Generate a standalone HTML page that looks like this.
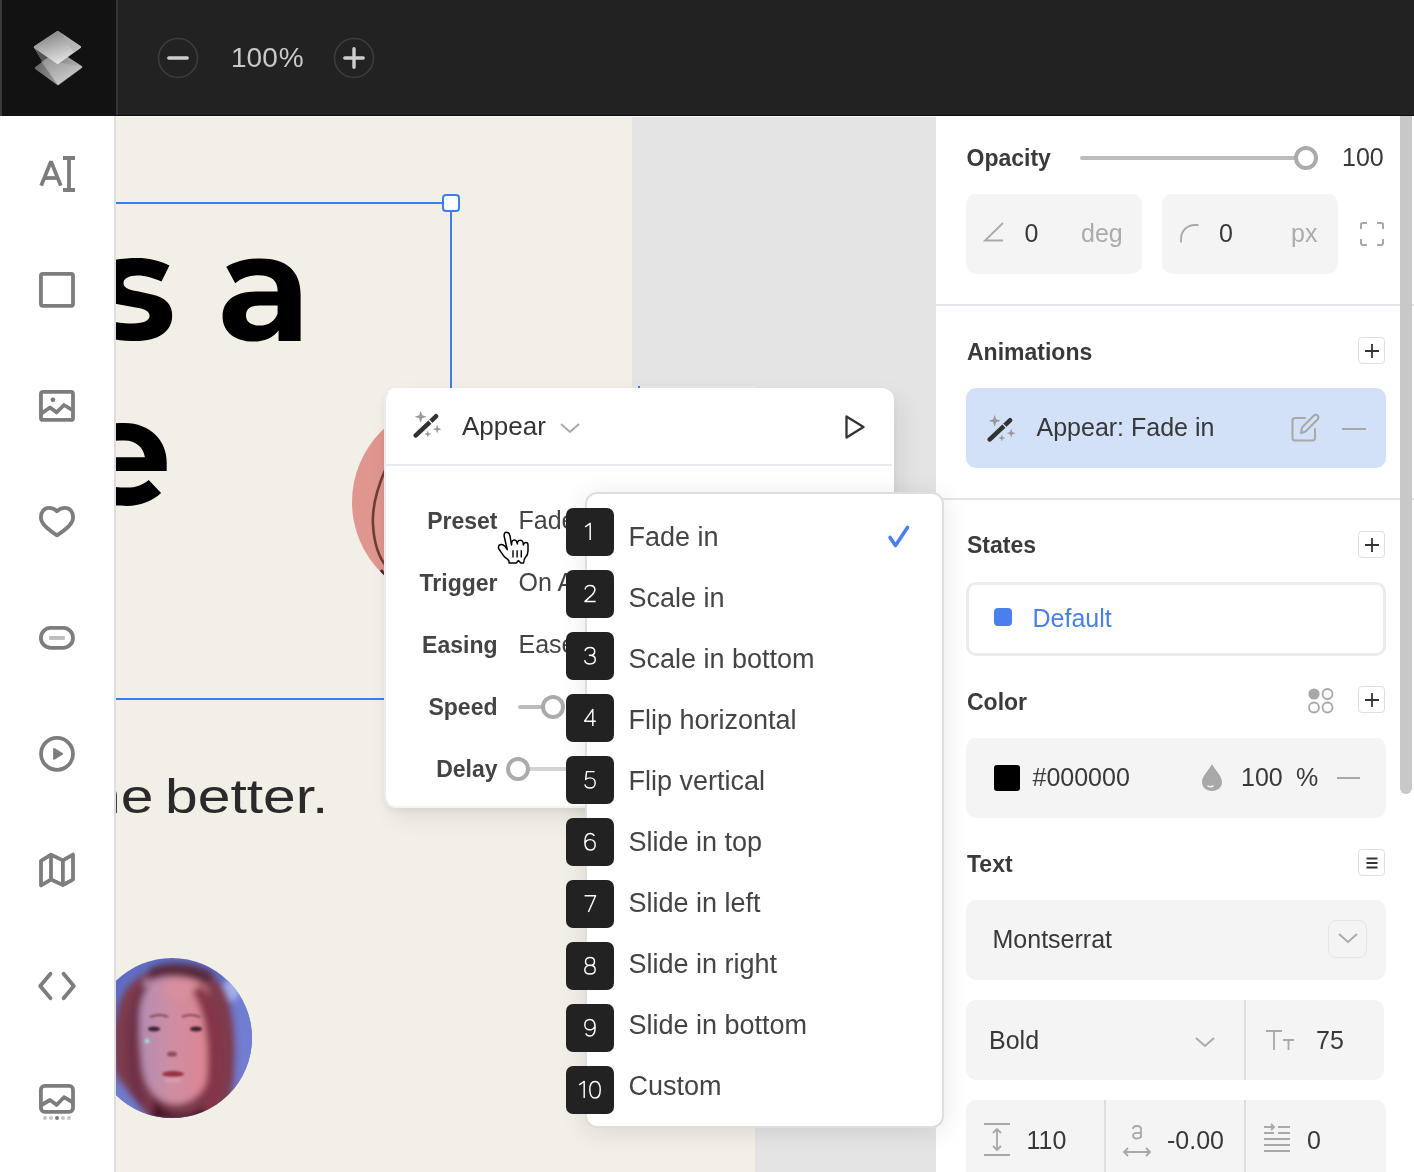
<!DOCTYPE html>
<html><head><meta charset="utf-8">
<style>
html,body{margin:0;padding:0;}
body{width:1414px;height:1172px;overflow:hidden;position:relative;background:#fff;font-family:"Liberation Sans", sans-serif;}
#root{position:absolute;left:0;top:0;width:1414px;height:1172px;overflow:hidden;will-change:transform;background:#fff;}
.a{position:absolute;}
.t{position:absolute;white-space:nowrap;}
</style></head><body>
<div id="root">
<div class="a" style="left:0px;top:0px;width:1414px;height:116px;background:#222222;"></div>
<div class="a" style="left:0px;top:115px;width:1414px;height:1px;background:#0c0c0c;"></div>
<div class="a" style="left:0px;top:0px;width:116px;height:116px;background:#121212;"></div>
<div class="a" style="left:0px;top:0px;width:2px;height:116px;background:#3a3a3a;"></div>
<div class="a" style="left:116px;top:0px;width:2px;height:115px;background:#363636;"></div>
<svg class="a" style="left:0;top:0" width="116" height="116" viewBox="0 0 116 116">
<defs>
<linearGradient id="lg1" x1="0.2" y1="0.1" x2="0.6" y2="1"><stop offset="0" stop-color="#8a8a8a"/><stop offset="1" stop-color="#e4e4e4"/></linearGradient>
<linearGradient id="lg2" x1="0" y1="0" x2="1" y2="0.3"><stop offset="0" stop-color="#5e5e5e"/><stop offset="1" stop-color="#b0b0b0"/></linearGradient>
<linearGradient id="lg3" x1="0" y1="0" x2="0.6" y2="1"><stop offset="0" stop-color="#7a7a7a"/><stop offset="1" stop-color="#cacaca"/></linearGradient>
</defs>
<path d="M36 68 L58 52 L81 67 L58 84 Z" fill="url(#lg2)" stroke="url(#lg2)" stroke-width="2.6" stroke-linejoin="round"/>
<path d="M35 48.5 L57.7 62.5 L81 67 L58 84 Z" fill="url(#lg3)" stroke="url(#lg3)" stroke-width="1.2" stroke-linejoin="round"/>
<path d="M35 48.5 L42 61.5 L48 57.5 Z" fill="#555"/>
<path d="M41.5 61 L57.5 84" stroke="#c8c8c8" stroke-width="0.8" opacity="0.7"/>
<path d="M35 47 L57.7 32 L79.8 47 L57.7 62.8 Z" fill="url(#lg1)" stroke="url(#lg1)" stroke-width="2.6" stroke-linejoin="round"/>
<path d="M62 33.5 L79.8 47 L73.2 52 Z" fill="#b0b0b0" opacity="0.7"/>
</svg>
<svg class="a" style="left:156px;top:36px" width="44" height="44" viewBox="0 0 44 44"><circle cx="22" cy="22" r="19.5" fill="none" stroke="#3d3d3d" stroke-width="1.6"/><path d="M12.8 22 H31.2" stroke="#cdcdcd" stroke-width="3.4" stroke-linecap="round"/></svg>
<svg class="a" style="left:332px;top:36px" width="44" height="44" viewBox="0 0 44 44"><circle cx="22" cy="22" r="19.5" fill="none" stroke="#3d3d3d" stroke-width="1.6"/><path d="M12.8 22 H31.2 M22 12.8 V31.2" stroke="#cdcdcd" stroke-width="3.4" stroke-linecap="round"/></svg>
<div class="t" style="top:44.30px;font-size:28px;line-height:28px;color:#c9c9c9;font-weight:400;left:231px;">100<span style="margin-left:1px">%</span></div>
<div class="a" style="left:0px;top:116px;width:115px;height:1056px;background:#ffffff;"></div>
<svg class="a" style="left:0;top:0" width="115" height="1172" viewBox="0 0 115 1172" fill="none" stroke="#7d7d7d" stroke-width="3.8">
<path d="M41.2 185.6 L51 161.4 L60.8 185.6" stroke-linejoin="bevel"/>
<path d="M44.5 178 H57.5"/>
<path d="M63 158 H75 M69 158 V190 M63 190 H75"/>
<rect x="40.95" y="273.9" width="32.05" height="32" rx="1.8"/>
<rect x="40.95" y="391.9" width="32.05" height="28" rx="2"/>
<path d="M41.5 413.5 L50 407.5 L55.5 411.5 M54.5 410.5 L56.5 412.5 L64 405 L73 410.5" stroke-linejoin="round"/>
<circle cx="52.9" cy="399.8" r="2.4" fill="#7d7d7d" stroke="none"/>
<path d="M57 511.3 C54.5 508.6 52 507.9 49 507.9 C44.2 507.9 40.9 511.8 40.9 517.2 C40.9 523.5 47 528.5 57 535.4 C67 528.5 73.1 523.5 73.1 517.2 C73.1 511.8 69.8 507.9 65 507.9 C62 507.9 59.5 508.6 57 511.3 Z" stroke-linejoin="round"/>
<rect x="40.9" y="627.9" width="32.1" height="19.9" rx="9.9"/>
<rect x="49.1" y="636" width="15.8" height="3.9" fill="#bdbdbd" stroke="none"/>
<circle cx="57" cy="753.9" r="16"/>
<path d="M54.2 749.2 L62 753.9 L54.2 758.6 Z" fill="#7d7d7d" stroke="#7d7d7d" stroke-width="2.2" stroke-linejoin="round"/>
<path d="M41 860.8 L51 854.6 L62.9 860.4 L73 854.6 V879.6 L62.9 885 L51 879.6 L41 885.4 Z M51 854.6 V879.6 M62.9 860.4 V885" stroke-linejoin="round"/>
<path d="M50.5 973.8 L40.2 986 L50.5 998.3 M63.6 973.8 L73.8 986 L63.6 998.3" stroke-linecap="round" stroke-linejoin="round"/>
<rect x="40.9" y="1085.9" width="32.1" height="25.9" rx="3.8"/>
<path d="M41.5 1105 L50 1100 L55.5 1104 M54.5 1103 L56.5 1105 L64 1097.2 L73 1102.5" stroke-linejoin="round"/>
<circle cx="45" cy="1118" r="2" fill="#c6c6c6" stroke="none"/><circle cx="51" cy="1118" r="2" fill="#c6c6c6" stroke="none"/><circle cx="57" cy="1118" r="2" fill="#7a7a7a" stroke="none"/><circle cx="63" cy="1118" r="2" fill="#c6c6c6" stroke="none"/><circle cx="69" cy="1118" r="2" fill="#c6c6c6" stroke="none"/>
</svg>
<div class="a" style="left:115px;top:116px;width:821px;height:1056px;background:#e4e4e4;"></div>
<div class="a" style="left:115px;top:116px;width:821px;height:1px;background:#fbfbf6;"></div>
<div class="a" style="left:115px;top:117px;width:517px;height:270px;background:#f2efe7;"></div>
<div class="a" style="left:115px;top:386px;width:640px;height:786px;background:#f2efe7;"></div>
<div class="a" style="left:632px;top:386px;width:124px;height:2px;background:#ece9df;"></div>
<div class="a" style="left:115px;top:116px;width:821px;height:1056px;overflow:hidden"><svg class="a" style="left:-15px;top:134px;overflow:visible" width="100" height="100" viewBox="100 250 100 100"><path d="M100 263 C112 259.5 125 258.1 137.6 258.1 C148 258.1 160 260.8 169.4 265.4 L161.5 281.6 C154 278.3 145.5 275.6 137.6 275.6 C128.5 275.6 123.5 278.8 123.5 283.3 C123.5 287.5 128 289.8 137.6 291.3 L152 294.5 C165.5 297.5 172.2 304.5 172.2 315.5 C172.2 331.5 158.5 341 136 341 C123.5 341 110 339 100 336.5 L100 319 C112 321.8 124 323.4 133.3 323.4 C143.5 323.4 149.6 320.8 149.6 315.8 C149.6 311.5 145.5 309.3 137 307.8 L118 304.3 C108 302.5 100 300 100 298 Z" fill="#000"/></svg>
<svg class="a" style="left:100px;top:134px;overflow:visible" width="100" height="100" viewBox="215 250 100 100"><path fill-rule="evenodd" d="M300.6 341 L278.6 341 L278.6 330.5 C273 338 264 341.6 253.5 341.6 C234.5 341.6 222.6 331.5 222.6 316.5 C222.6 301 234.5 291.6 257 291.6 L277.6 291.6 L277.6 290.5 C277.6 280.5 271 275.3 258.5 275.3 C250 275.3 242 277.8 235.2 283.2 L226.3 266.8 C235.5 261.2 248 258.4 260.8 258.4 C286 258.4 300.6 270.5 300.6 294.5 Z M277.6 305.5 L259.5 305.5 C250 305.5 246 309 246 315.5 C246 321.8 251.2 325.6 259.8 325.6 C268 325.6 275 321.5 277.6 313.5 Z" fill="#000"/></svg>
<svg class="a" style="left:-15px;top:299px;overflow:visible" width="100" height="100" viewBox="100 415 100 100"><path fill-rule="evenodd" d="M100 424.5 C106 423.5 115 423.1 124.8 423.1 C150 423.1 166.7 441 166.7 462 L166.7 470.9 L100 470.9 L100 484 C108 486.5 118 487.6 127 487.6 C135.5 487.6 143 484.8 148.7 479.9 L161.1 493.1 C152 501.5 140 506 127 506 C115 506 107 505 100 503.5 Z M100 441 C108 440.7 116 440.6 124.8 440.6 C135.5 440.6 143.5 447.5 144.9 457.3 L100 457.3 Z" fill="#000"/></svg>
<div class="t" style="top:655.52px;font-size:49px;line-height:49px;color:#2a2a2a;font-weight:400;left:-27px;transform:scaleX(1.2);transform-origin:0 0;">ne</div>
<div class="t" style="top:655.52px;font-size:49px;line-height:49px;color:#2a2a2a;font-weight:400;left:49.5px;transform:scaleX(1.2);transform-origin:0 0;">better.</div>
<svg class="a" style="left:237px;top:286px" width="200" height="200" viewBox="352 402 200 200">
<defs><clipPath id="pc"><circle cx="452" cy="502" r="100"/></clipPath><filter id="bl3" x="-50%" y="-20%" width="200%" height="140%"><feGaussianBlur stdDeviation="0.6"/></filter></defs>
<g clip-path="url(#pc)">
<rect x="352" y="402" width="200" height="200" fill="#df968e"/>
<path d="M386 468 C377 488 372 508 373 525 C374 542 378 556 386 566" fill="none" stroke="#6e3c38" stroke-width="2.6" filter="url(#bl3)"/>
<path d="M381 570 L386 577" stroke="#3a2a30" stroke-width="3" filter="url(#bl3)"/>
</g></svg>
<svg class="a" style="left:-23px;top:842px" width="160" height="160" viewBox="92 958 160 160">
<defs>
<clipPath id="gc"><circle cx="172" cy="1038" r="80"/></clipPath>
<filter id="bl" x="-20%" y="-20%" width="140%" height="140%"><feGaussianBlur stdDeviation="3"/></filter>
<filter id="bl2" x="-20%" y="-20%" width="140%" height="140%"><feGaussianBlur stdDeviation="1.3"/></filter>
<linearGradient id="fg" x1="0" y1="0" x2="1" y2="0"><stop offset="0" stop-color="#b48db4"/><stop offset="0.45" stop-color="#cf8ea2"/><stop offset="1" stop-color="#e0838f"/></linearGradient>
</defs>
<g clip-path="url(#gc)">
<rect x="92" y="958" width="160" height="160" fill="#5f6ec4"/>
<g filter="url(#bl)">
<ellipse cx="240" cy="1045" rx="24" ry="70" fill="#6f7dd0"/>
<ellipse cx="231" cy="990" rx="8" ry="11" fill="#a4b0f0"/>
<path d="M118 1010 C125 965 190 950 222 985 C240 1010 238 1080 228 1118 L128 1118 C112 1080 110 1040 118 1010 Z" fill="#7d3a4c"/>
<path d="M145 980 C160 972 190 972 205 985 C214 1000 214 1040 210 1070 C206 1092 192 1104 176 1104 C160 1104 147 1092 143 1070 C139 1040 138 1000 145 980 Z" fill="url(#fg)"/>
<ellipse cx="182" cy="990" rx="18" ry="10" fill="#d9909c" opacity="0.8"/>
<path d="M155 1098 C165 1120 200 1120 206 1098 L208 1120 L150 1120 Z" fill="#4a1828"/>
<path d="M200 985 C220 1000 228 1060 216 1112 L202 1112 C212 1060 208 1015 192 992 Z" fill="#86364a"/>
<path d="M150 985 C133 1005 132 1070 148 1106 L136 1106 C122 1070 124 1010 140 988 Z" fill="#6e3048"/>
<path d="M150 968 C170 960 200 962 215 975 L205 985 C190 975 165 974 148 982 Z" fill="#5a2a3e"/>
<path d="M92 1050 C108 1062 124 1090 150 1120 L92 1120 Z" fill="#6e7dcc"/>
<path d="M92 990 C100 975 112 966 125 962 C118 980 116 995 114 1010 L92 1010 Z" fill="#5b69c0"/>
</g>
<g filter="url(#bl2)">
<ellipse cx="154" cy="1029" rx="6" ry="2.4" fill="#3b2232"/>
<ellipse cx="196" cy="1029" rx="6" ry="2.4" fill="#3b2232"/>
<ellipse cx="172" cy="1054" rx="5" ry="2.6" fill="#8e4a5c"/>
<ellipse cx="173" cy="1074" rx="11" ry="3" fill="#9a3042"/>
<ellipse cx="173" cy="1080" rx="9" ry="2.6" fill="#d89aac"/>
<path d="M150 1017 Q160 1013 168 1017 M182 1017 Q190 1013 200 1017" stroke="#6a3848" stroke-width="1.4" fill="none"/>
<circle cx="147" cy="1041" r="2.5" fill="#9ed6d6"/>
</g>
</g>
</svg>
</div><div class="a" style="left:115px;top:202px;width:336px;height:2px;background:#3f7cf0;"></div>
<div class="a" style="left:450px;top:203px;width:2px;height:185px;background:#3f7cf0;"></div>
<div class="a" style="left:115px;top:698px;width:270px;height:2px;background:#3f7cf0;"></div>
<div class="a" style="left:638px;top:386px;width:2px;height:2px;background:#3f7cf0;"></div>
<div class="a" style="left:442px;top:194px;width:14px;height:14px;border:2px solid #3f7cf0;border-radius:4px;background:#fff"></div>
<div class="a" style="left:114px;top:116px;width:2px;height:1056px;background:#dedede;"></div>
<div class="a" style="left:936px;top:116px;width:478px;height:1056px;background:#ffffff;"></div>
<div class="t" style="top:146.53px;font-size:23px;line-height:23px;color:#3a3a3a;font-weight:700;left:966.5px;">Opacity</div>
<div class="a" style="left:1080px;top:156px;width:226px;height:4px;background:#bdbdbd;border-radius:2px;"></div>
<div class="a" style="left:1294px;top:146px;width:16px;height:16px;border:4px solid #ababab;border-radius:50%;background:#fff"></div>
<div class="t" style="top:144.84px;font-size:25px;line-height:25px;color:#383838;font-weight:400;left:1342px;">100</div>
<div class="a" style="left:966px;top:194px;width:176px;height:80px;background:#f4f4f4;border-radius:10px;"></div>
<div class="a" style="left:1162px;top:194px;width:176px;height:80px;background:#f4f4f4;border-radius:10px;"></div>
<svg class="a" style="left:982px;top:220px" width="24" height="24" viewBox="0 0 24 24"><path d="M21 3 L3 20.5 H21" fill="none" stroke="#a8a8a8" stroke-width="1.8"/></svg>
<div class="t" style="top:220.54px;font-size:25px;line-height:25px;color:#383838;font-weight:400;left:1024.5px;">0</div>
<div class="t" style="top:220.54px;font-size:25px;line-height:25px;color:#ababab;font-weight:400;left:1081px;">deg</div>
<svg class="a" style="left:1178px;top:222px" width="24" height="24" viewBox="0 0 24 24"><path d="M3 20.5 V17 C3 9 9 3 17 3 H20.5" fill="none" stroke="#a8a8a8" stroke-width="1.8"/></svg>
<div class="t" style="top:220.54px;font-size:25px;line-height:25px;color:#383838;font-weight:400;left:1219px;">0</div>
<div class="t" style="top:220.54px;font-size:25px;line-height:25px;color:#ababab;font-weight:400;left:1291px;">px</div>
<svg class="a" style="left:1358px;top:220px" width="28" height="28" viewBox="0 0 28 28" fill="none" stroke="#a8a8a8" stroke-width="2"><path d="M3 9 V5 Q3 3 5 3 H9 M19 3 H23 Q25 3 25 5 V9 M25 19 V23 Q25 25 23 25 H19 M9 25 H5 Q3 25 3 23 V19"/></svg>
<div class="a" style="left:936px;top:304px;width:478px;height:1.5px;background:#e4e4ec;"></div>
<div class="t" style="top:340.83px;font-size:23px;line-height:23px;color:#3a3a3a;font-weight:700;left:967px;">Animations</div>
<div class="a" style="left:1358px;top:336.5px;width:25px;height:25px;border:1.5px solid #e0e0e0;border-radius:4px;background:#fff"></div><svg class="a" style="left:1358px;top:336.5px" width="28" height="28" viewBox="0 0 28 28"><path d="M7 14 H21 M14 7 V21" stroke="#333" stroke-width="1.8"/></svg>
<div class="a" style="left:966px;top:388px;width:420px;height:80px;background:#d2e0f8;border-radius:10px;"></div>
<svg class="a" style="left:987px;top:413px" width="30" height="30" viewBox="0 0 30 30"><path d="M2.8 26.4 L23 7.3" stroke="#333" stroke-width="4.6" stroke-linecap="round"/><path d="M15.2 10.4 L19.6 15" stroke="#d2e0f8" stroke-width="1.3"/><path d="M7.70 1.80 L9.23 6.27 L13.70 7.80 L9.23 9.33 L7.70 13.80 L6.17 9.33 L1.70 7.80 L6.17 6.27 Z" fill="#9a9a9a"/><path d="M24.20 15.80 L25.32 19.08 L28.60 20.20 L25.32 21.32 L24.20 24.60 L23.08 21.32 L19.80 20.20 L23.08 19.08 Z" fill="#9a9a9a"/><path d="M14.80 21.40 L15.72 24.08 L18.40 25.00 L15.72 25.92 L14.80 28.60 L13.88 25.92 L11.20 25.00 L13.88 24.08 Z" fill="#9a9a9a"/></svg>
<div class="t" style="top:414.84px;font-size:25px;line-height:25px;color:#383838;font-weight:400;left:1036.5px;">Appear: Fade in</div>
<svg class="a" style="left:1290px;top:413px" width="32" height="30" viewBox="0 0 32 30" fill="none" stroke="#a8a8a8" stroke-width="2" stroke-linejoin="round" stroke-linecap="round"><path d="M15 5 H5 Q2.5 5 2.5 7.5 V25 Q2.5 27.5 5 27.5 H22.5 Q25 27.5 25 25 V16"/><path d="M11 20 L12 14.5 L24.5 2 Q26 1 27.5 2.5 L28 3 Q29 4.5 28 6 L15.5 18.5 Z"/></svg>
<div class="a" style="left:1342px;top:427.5px;width:24px;height:2px;background:#a8a8a8;"></div>
<div class="a" style="left:936px;top:498px;width:478px;height:1.5px;background:#e4e4ec;"></div>
<div class="t" style="top:534.23px;font-size:23px;line-height:23px;color:#3a3a3a;font-weight:700;left:967px;">States</div>
<div class="a" style="left:1358px;top:530.5px;width:25px;height:25px;border:1.5px solid #e0e0e0;border-radius:4px;background:#fff"></div><svg class="a" style="left:1358px;top:530.5px" width="28" height="28" viewBox="0 0 28 28"><path d="M7 14 H21 M14 7 V21" stroke="#333" stroke-width="1.8"/></svg>
<div class="a" style="left:966px;top:582px;width:414px;height:68px;border:3px solid #ececec;border-radius:10px;background:#fff"></div>
<div class="a" style="left:994px;top:608px;width:18px;height:18px;background:#4a80ee;border-radius:4px;"></div>
<div class="t" style="top:605.84px;font-size:25px;line-height:25px;color:#4a7fe8;font-weight:400;left:1032.5px;">Default</div>
<div class="t" style="top:690.53px;font-size:23px;line-height:23px;color:#3a3a3a;font-weight:700;left:967px;">Color</div>
<svg class="a" style="left:1306px;top:686px" width="30" height="30" viewBox="0 0 30 30" fill="none" stroke="#a8a8a8" stroke-width="1.8"><circle cx="8" cy="8" r="5.6" fill="#a8a8a8" stroke="none"/><circle cx="21.5" cy="8" r="5"/><circle cx="8" cy="21.5" r="5"/><circle cx="21.5" cy="21.5" r="5"/></svg>
<div class="a" style="left:1358px;top:686px;width:25px;height:25px;border:1.5px solid #e0e0e0;border-radius:4px;background:#fff"></div><svg class="a" style="left:1358px;top:686px" width="28" height="28" viewBox="0 0 28 28"><path d="M7 14 H21 M14 7 V21" stroke="#333" stroke-width="1.8"/></svg>
<div class="a" style="left:966px;top:738px;width:420px;height:80px;background:#f4f4f4;border-radius:10px;"></div>
<div class="a" style="left:994px;top:765px;width:26px;height:26px;background:#000;border-radius:3px;"></div>
<div class="t" style="top:765.44px;font-size:25px;line-height:25px;color:#383838;font-weight:400;left:1032.5px;">#000000</div>
<svg class="a" style="left:1199px;top:762px" width="26" height="30" viewBox="0 0 26 30"><path d="M13 2 C10 8 3 14 3 20 C3 25.5 7.5 29 13 29 C18.5 29 23 25.5 23 20 C23 14 16 8 13 2 Z" fill="#a8a8a8"/><path d="M9 24 Q11 25.5 14 24" fill="none" stroke="#f4f4f4" stroke-width="1.5" stroke-linecap="round"/></svg>
<div class="t" style="top:765.44px;font-size:25px;line-height:25px;color:#383838;font-weight:400;left:1241px;">100</div>
<div class="t" style="top:765.44px;font-size:25px;line-height:25px;color:#383838;font-weight:400;left:1296px;">%</div>
<div class="a" style="left:1337px;top:777px;width:23px;height:2px;background:#a8a8a8;"></div>
<div class="t" style="top:852.53px;font-size:23px;line-height:23px;color:#3a3a3a;font-weight:700;left:967px;">Text</div>
<div class="a" style="left:1358px;top:848.5px;width:25px;height:25px;border:1.5px solid #e0e0e0;border-radius:4px;background:#fff"></div><svg class="a" style="left:1358px;top:848.5px" width="28" height="28" viewBox="0 0 28 28"><path d="M8.5 9.5 H19.5 M8.5 14 H19.5 M8.5 18.5 H19.5" stroke="#333" stroke-width="2"/></svg>
<div class="a" style="left:966px;top:900px;width:420px;height:80px;background:#f4f4f4;border-radius:10px;"></div>
<div class="t" style="top:927.04px;font-size:25px;line-height:25px;color:#383838;font-weight:400;left:992.5px;">Montserrat</div>
<div class="a" style="left:1328px;top:920px;width:37px;height:36px;border:1.5px solid #e6e6e6;border-radius:8px;"></div>
<svg class="a" style="left:1336px;top:930px" width="24" height="16" viewBox="0 0 24 16"><path d="M3 4 L12 12 L21 4" fill="none" stroke="#aaa" stroke-width="2"/></svg>
<div class="a" style="left:966px;top:1000px;width:418px;height:80px;background:#f4f4f4;border-radius:10px;"></div>
<div class="a" style="left:1244px;top:1000px;width:2px;height:80px;background:#dedede;"></div>
<div class="t" style="top:1028.04px;font-size:25px;line-height:25px;color:#383838;font-weight:400;left:989px;">Bold</div>
<svg class="a" style="left:1193px;top:1034px" width="24" height="16" viewBox="0 0 24 16"><path d="M3 4 L12 12 L21 4" fill="none" stroke="#aaa" stroke-width="2"/></svg>
<svg class="a" style="left:1264px;top:1028px" width="32" height="24" viewBox="0 0 32 24" fill="none" stroke="#a8a8a8" stroke-width="1.8"><path d="M2 3 H18 M10 3 V22 M19 12 H30 M24.5 12 V22"/></svg>
<div class="t" style="top:1028.04px;font-size:25px;line-height:25px;color:#383838;font-weight:400;left:1316px;">75</div>
<div class="a" style="left:966px;top:1100px;width:420px;height:80px;background:#f4f4f4;border-radius:10px;"></div>
<div class="a" style="left:1104px;top:1100px;width:2px;height:72px;background:#dedede;"></div>
<div class="a" style="left:1244px;top:1100px;width:2px;height:72px;background:#dedede;"></div>
<svg class="a" style="left:982px;top:1122px" width="30" height="36" viewBox="0 0 30 36" fill="none" stroke="#a8a8a8" stroke-width="1.8"><path d="M2 2 H28 M2 33 H28 M15 7 V28 M11 11 L15 7 L19 11 M11 24 L15 28 L19 24"/></svg>
<div class="t" style="top:1128.44px;font-size:25px;line-height:25px;color:#383838;font-weight:400;left:1026.5px;">110</div>
<svg class="a" style="left:1122px;top:1123px" width="30" height="36" viewBox="0 0 30 36" fill="none" stroke="#a8a8a8" stroke-width="1.8"><path d="M11 6 Q11 3 15 3 Q19 3 19 6 V15 M19 10 Q11 9 11 12.5 Q11 15.5 15 15.5 Q19 15.5 19 12" /><path d="M2 29 H28 M6 25 L2 29 L6 33 M24 25 L28 29 L24 33"/></svg>
<div class="t" style="top:1128.44px;font-size:25px;line-height:25px;color:#383838;font-weight:400;left:1167px;">-0.00</div>
<svg class="a" style="left:1262px;top:1122px" width="30" height="36" viewBox="0 0 30 36" fill="none" stroke="#a8a8a8" stroke-width="1.8"><path d="M2 5 H12 M9 2 L12 5 L9 8 M16 5 H28 M16 11 H28 M2 11 H12 M2 17 H28 M2 23 H28 M2 29 H28"/></svg>
<div class="t" style="top:1128.44px;font-size:25px;line-height:25px;color:#383838;font-weight:400;left:1307px;">0</div>
<div class="a" style="left:384px;top:388px;width:506px;height:416px;background:#fff;border:2px solid #eaecf0;border-top-color:#fff;border-right-color:#fff;border-bottom-color:#f3f4f6;border-radius:12px;box-shadow:0 3px 6px rgba(0,0,0,0.06), 8px 10px 24px rgba(0,0,0,0.07)"></div>
<div class="a" style="left:386px;top:464px;width:506px;height:2px;background:#e7eaef;"></div>
<svg class="a" style="left:413px;top:409px" width="30" height="30" viewBox="0 0 30 30"><path d="M2.8 26.4 L23 7.3" stroke="#333" stroke-width="4.6" stroke-linecap="round"/><path d="M15.2 10.4 L19.6 15" stroke="#fff" stroke-width="1.3"/><path d="M7.70 1.80 L9.23 6.27 L13.70 7.80 L9.23 9.33 L7.70 13.80 L6.17 9.33 L1.70 7.80 L6.17 6.27 Z" fill="#9a9a9a"/><path d="M24.20 15.80 L25.32 19.08 L28.60 20.20 L25.32 21.32 L24.20 24.60 L23.08 21.32 L19.80 20.20 L23.08 19.08 Z" fill="#9a9a9a"/><path d="M14.80 21.40 L15.72 24.08 L18.40 25.00 L15.72 25.92 L14.80 28.60 L13.88 25.92 L11.20 25.00 L13.88 24.08 Z" fill="#9a9a9a"/></svg>
<div class="t" style="top:412.99px;font-size:26px;line-height:26px;color:#333;font-weight:400;left:462px;">Appear</div>
<svg class="a" style="left:558px;top:420px" width="24" height="16" viewBox="0 0 24 16"><path d="M3 4 L12 12 L21 4" fill="none" stroke="#aaa" stroke-width="2"/></svg>
<svg class="a" style="left:842px;top:412px" width="26" height="30" viewBox="0 0 26 30"><path d="M4.5 4.5 L21.5 15 L4.5 25.5 Z" fill="none" stroke="#333" stroke-width="2.3" stroke-linejoin="round"/></svg>
<div class="t" style="top:509.53px;font-size:23px;line-height:23px;color:#444;font-weight:700;right:916.5px;text-align:right;">Preset</div>
<div class="t" style="top:507.84px;font-size:25px;line-height:25px;color:#444;font-weight:400;left:518.5px;">Fade in</div>
<div class="t" style="top:571.53px;font-size:23px;line-height:23px;color:#444;font-weight:700;right:916.5px;text-align:right;">Trigger</div>
<div class="t" style="top:569.84px;font-size:25px;line-height:25px;color:#444;font-weight:400;left:518.5px;">On Appear</div>
<div class="t" style="top:633.53px;font-size:23px;line-height:23px;color:#444;font-weight:700;right:916.5px;text-align:right;">Easing</div>
<div class="t" style="top:631.84px;font-size:25px;line-height:25px;color:#444;font-weight:400;left:518.5px;">Ease in out</div>
<div class="t" style="top:695.53px;font-size:23px;line-height:23px;color:#444;font-weight:700;right:916.5px;text-align:right;">Speed</div>
<div class="t" style="top:757.53px;font-size:23px;line-height:23px;color:#444;font-weight:700;right:916.5px;text-align:right;">Delay</div>
<div class="a" style="left:518px;top:705px;width:30px;height:4px;background:#bdbdbd;border-radius:2px;"></div>
<div class="a" style="left:541px;top:695px;width:16px;height:16px;border:4px solid #ababab;border-radius:50%;background:#fff"></div>
<div class="a" style="left:525px;top:767px;width:60px;height:4px;background:#d4d4d4;border-radius:2px;"></div>
<div class="a" style="left:506px;top:757px;width:16px;height:16px;border:4px solid #ababab;border-radius:50%;background:#fff"></div>
<svg class="a" style="left:490px;top:525px;overflow:visible" width="50" height="45" viewBox="490 525 50 45"><path d="M507.3 549.6 L504.2 536.5 C503.8 533.5 505 532.3 506.5 532.3 C508.3 532.3 509.5 533.5 510 535.8 L511.5 545 L511.8 542 C512.3 540.5 513.2 540 514.2 540 C515.8 540 516.8 541 517.2 543 L517.3 544 L517.6 542 C518 540.8 519.2 540.2 520.3 540.2 C521.8 540.2 522.8 541.2 523.2 543 L523.4 545 L523.8 543.8 C524.3 542.8 525.2 542.4 526.1 542.4 C527.3 542.4 528 543.3 528 545 L528 551 C528 553.5 527.2 555.5 525.5 557.3 C524 559 523.6 560.5 523.6 563 L520.8 563 L518.4 560.5 L516.3 563 L509.2 563 L508.8 560.8 C507.5 559 505.8 557.8 504.6 556.9 C502.5 554.5 500.8 551.5 499.2 549.6 C498 548 498.3 545.5 500 544.8 C501.5 544.2 503.5 544.8 505 546.3 Z" fill="#fff" stroke="#000" stroke-width="1.5" stroke-linejoin="round"/><path d="M513 550.3 V557.6 M517.1 550.3 V557.6 M521.3 550.3 V557.6" stroke="#000" stroke-width="1.4"/></svg>
<div class="a" style="left:585px;top:492px;width:355px;height:632px;background:#fff;border:2px solid #dedede;border-radius:12px;box-shadow:0 4px 26px rgba(0,0,0,0.10)"></div>
<div class="a" style="left:566px;top:508px;width:48px;height:48px;background:#222;border-radius:7px;"></div>
<svg class="a" style="left:584px;top:522.5px;overflow:visible" width="12" height="18" viewBox="0 0 12 18"><path d="M1.2 3.8 L6.2 0.4 V17" fill="none" stroke="#fff" stroke-width="1.45" stroke-linejoin="round"/></svg>
<div class="t" style="top:524.14px;font-size:27px;line-height:27px;color:#444;font-weight:400;left:628.5px;">Fade in</div>
<div class="a" style="left:566px;top:570px;width:48px;height:48px;background:#222;border-radius:7px;"></div>
<svg class="a" style="left:584px;top:584.5px;overflow:visible" width="12" height="18" viewBox="0 0 12 18"><path d="M1.2 4.6 C1.2 2 3.2 0.4 6 0.4 C8.9 0.4 10.9 2.2 10.9 4.8 C10.9 7 9.6 8.4 7.6 10.4 L1 16.4 H11.6" fill="none" stroke="#fff" stroke-width="1.45" stroke-linejoin="round"/></svg>
<div class="t" style="top:585.14px;font-size:27px;line-height:27px;color:#444;font-weight:400;left:628.5px;">Scale in</div>
<div class="a" style="left:566px;top:632px;width:48px;height:48px;background:#222;border-radius:7px;"></div>
<svg class="a" style="left:584px;top:646.5px;overflow:visible" width="12" height="18" viewBox="0 0 12 18"><path d="M1 4 C1.4 1.8 3.4 0.4 6 0.4 C8.8 0.4 10.7 2 10.7 4.4 C10.7 6.8 8.8 8.3 5.4 8.3 C9.3 8.3 11.3 10 11.3 12.6 C11.3 15.2 9.2 17 6 17 C3.1 17 1 15.5 0.7 13.2" fill="none" stroke="#fff" stroke-width="1.45" stroke-linejoin="round"/></svg>
<div class="t" style="top:646.14px;font-size:27px;line-height:27px;color:#444;font-weight:400;left:628.5px;">Scale in bottom</div>
<div class="a" style="left:566px;top:694px;width:48px;height:48px;background:#222;border-radius:7px;"></div>
<svg class="a" style="left:584px;top:708.5px;overflow:visible" width="12" height="18" viewBox="0 0 12 18"><path d="M8.8 17 V0.4 L0.6 12.2 H11.8" fill="none" stroke="#fff" stroke-width="1.45" stroke-linejoin="round"/></svg>
<div class="t" style="top:707.14px;font-size:27px;line-height:27px;color:#444;font-weight:400;left:628.5px;">Flip horizontal</div>
<div class="a" style="left:566px;top:756px;width:48px;height:48px;background:#222;border-radius:7px;"></div>
<svg class="a" style="left:584px;top:770.5px;overflow:visible" width="12" height="18" viewBox="0 0 12 18"><path d="M10.6 0.6 H2.6 L1.6 8.6 C2.6 7.5 4.1 6.9 6 6.9 C9.1 6.9 11.2 9 11.2 11.9 C11.2 15 9 17 6 17 C3.3 17 1.3 15.5 0.9 13.4" fill="none" stroke="#fff" stroke-width="1.45" stroke-linejoin="round"/></svg>
<div class="t" style="top:768.14px;font-size:27px;line-height:27px;color:#444;font-weight:400;left:628.5px;">Flip vertical</div>
<div class="a" style="left:566px;top:818px;width:48px;height:48px;background:#222;border-radius:7px;"></div>
<svg class="a" style="left:584px;top:832.5px;overflow:visible" width="12" height="18" viewBox="0 0 12 18"><path d="M10.3 3 C9.5 1.3 8 0.4 6.2 0.4 C2.7 0.4 0.9 3.6 0.9 9 C0.9 14 2.9 17 6.1 17 C9.1 17 11.2 14.9 11.2 11.7 C11.2 8.6 9.1 6.6 6.3 6.6 C3.6 6.6 1.6 8.3 1 10.5" fill="none" stroke="#fff" stroke-width="1.45" stroke-linejoin="round"/></svg>
<div class="t" style="top:829.14px;font-size:27px;line-height:27px;color:#444;font-weight:400;left:628.5px;">Slide in top</div>
<div class="a" style="left:566px;top:880px;width:48px;height:48px;background:#222;border-radius:7px;"></div>
<svg class="a" style="left:584px;top:894.5px;overflow:visible" width="12" height="18" viewBox="0 0 12 18"><path d="M0.6 0.8 H11.6 L4.4 17" fill="none" stroke="#fff" stroke-width="1.45" stroke-linejoin="round"/></svg>
<div class="t" style="top:890.14px;font-size:27px;line-height:27px;color:#444;font-weight:400;left:628.5px;">Slide in left</div>
<div class="a" style="left:566px;top:942px;width:48px;height:48px;background:#222;border-radius:7px;"></div>
<svg class="a" style="left:584px;top:956.5px;overflow:visible" width="12" height="18" viewBox="0 0 12 18"><path d="M6 8.3 C3.4 8.3 1.5 6.7 1.5 4.4 C1.5 2 3.4 0.4 6 0.4 C8.6 0.4 10.5 2 10.5 4.4 C10.5 6.7 8.6 8.3 6 8.3 C2.9 8.3 0.8 10.1 0.8 12.7 C0.8 15.3 2.9 17 6 17 C9.1 17 11.2 15.3 11.2 12.7 C11.2 10.1 9.1 8.3 6 8.3 Z" fill="none" stroke="#fff" stroke-width="1.45" stroke-linejoin="round"/></svg>
<div class="t" style="top:951.14px;font-size:27px;line-height:27px;color:#444;font-weight:400;left:628.5px;">Slide in right</div>
<div class="a" style="left:566px;top:1004px;width:48px;height:48px;background:#222;border-radius:7px;"></div>
<svg class="a" style="left:584px;top:1018.5px;overflow:visible" width="12" height="18" viewBox="0 0 12 18"><path d="M1.7 14.4 C2.5 16.1 4 17 5.8 17 C9.3 17 11.1 13.8 11.1 8.4 C11.1 3.4 9.1 0.4 5.9 0.4 C2.9 0.4 0.8 2.5 0.8 5.7 C0.8 8.8 2.9 10.8 5.7 10.8 C8.4 10.8 10.4 9.1 11 6.9" fill="none" stroke="#fff" stroke-width="1.45" stroke-linejoin="round"/></svg>
<div class="t" style="top:1012.14px;font-size:27px;line-height:27px;color:#444;font-weight:400;left:628.5px;">Slide in bottom</div>
<div class="a" style="left:566px;top:1066px;width:48px;height:48px;background:#222;border-radius:7px;"></div>
<svg class="a" style="left:577.5px;top:1080.5px;overflow:visible" width="12" height="18" viewBox="0 0 12 18"><path d="M1.2 3.8 L6.2 0.4 V17" fill="none" stroke="#fff" stroke-width="1.45" stroke-linejoin="round"/></svg><svg class="a" style="left:589px;top:1080.5px;overflow:visible" width="12" height="18" viewBox="0 0 12 18"><path d="M6 0.4 C9.3 0.4 11.2 3.6 11.2 8.7 C11.2 13.8 9.3 17 6 17 C2.7 17 0.8 13.8 0.8 8.7 C0.8 3.6 2.7 0.4 6 0.4 Z" fill="none" stroke="#fff" stroke-width="1.45" stroke-linejoin="round"/></svg>
<div class="t" style="top:1073.14px;font-size:27px;line-height:27px;color:#444;font-weight:400;left:628.5px;">Custom</div>
<svg class="a" style="left:884px;top:522px" width="30" height="30" viewBox="0 0 30 30"><path d="M6 15.5 L11.5 23.5 L23.5 5.5" fill="none" stroke="#4a80ee" stroke-width="3.6" stroke-linecap="round" stroke-linejoin="round"/></svg>
<div id="rpfront"></div><div class="a" style="left:1400px;top:116px;width:12px;height:678px;background:#c8c8c8;border-radius:0 0 6px 6px;"></div>
</div>
</body></html>
